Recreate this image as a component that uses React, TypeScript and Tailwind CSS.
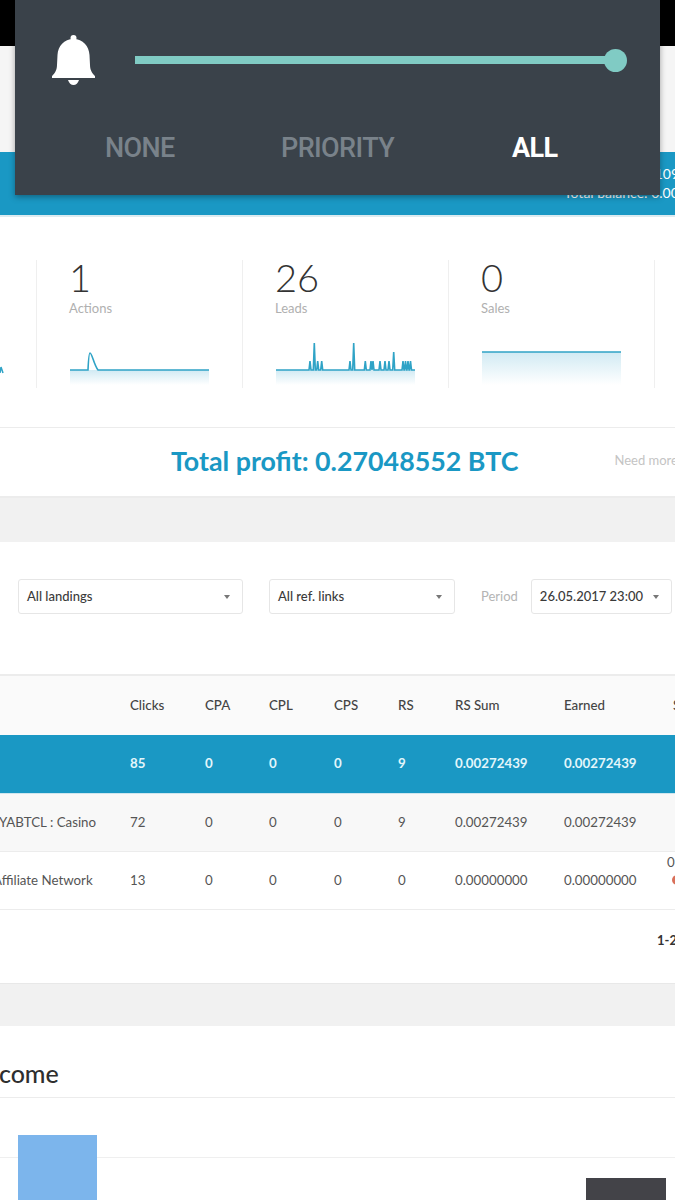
const tableCols = "grid grid-cols-[130px_75px_64px_65px_64px_57px_109px_109px_100px] items-center";

const leadSpikes: [number, number][] = [
  [34, 9], [38.3, 27], [41.7, 9], [45.7, 9], [74, 9], [77.7, 27], [89.3, 9], [95, 9], [97, 9],
  [104, 9], [109, 9], [113, 9], [117.7, 18], [127, 9], [129.5, 9], [132, 9], [134.5, 9],
];

function leadsPath() {
  let d = "M0 35";
  for (const [x, h] of leadSpikes) {
    d += ` L${x - 1} 35 L${x} ${35 - h} L${x + 1} 35`;
  }
  return d + " L139 35";
}

function Spark({ id, line, top }: { id: string; line: string; top: number }) {
  return (
    <svg width="139" height="52" viewBox="0 0 139 52" className="block">
      <defs>
        <linearGradient id={id} x1="0" y1="0" x2="0" y2="1">
          <stop offset="0" stopColor="#1a98c4" stopOpacity="0.2" />
          <stop offset="1" stopColor="#1a98c4" stopOpacity="0" />
        </linearGradient>
      </defs>
      <rect x="0" y={top} width="139" height={50 - top} fill={`url(#${id})`} />
      <path d={line} fill="none" stroke="#2fa3c6" strokeWidth="1.6" />
    </svg>
  );
}

function Stat({ value, label, id, line, top }: { value: string; label: string; id: string; line: string; top: number }) {
  return (
    <div className="w-[206px] shrink-0 h-[128px] border-l border-[#efefef] pl-[32px]">
      <div className="text-[38px] leading-[36px] font-light text-[#333] -mt-[1px]">{value}</div>
      <div className="text-[13px] leading-[16px] mt-[5px] text-[#b0b0b0]">{label}</div>
      <div className="mt-[19px] ml-[1px]">
        <Spark id={id} line={line} top={top} />
      </div>
    </div>
  );
}

function Select({ label, className }: { label: string; className: string }) {
  return (
    <div className={`h-[35px] border border-[#e6e6e6] rounded-[3px] flex items-center justify-between pl-[8px] pr-[12px] text-[13px] font-medium text-[#3a3a3a] ${className}`}>
      <span className="whitespace-nowrap">{label}</span>
      <span className="w-0 h-0 border-x-[3px] border-x-transparent border-t-[4px] border-t-[#777]" />
    </div>
  );
}

function Row({ cells, className }: { cells: string[]; className: string }) {
  return (
    <div className={`${tableCols} text-[13.3px] ${className}`}>
      {cells.map((c, i) => (
        <div key={i} className="whitespace-nowrap">{c}</div>
      ))}
    </div>
  );
}

export default function App() {
  return (
    <div className="relative w-[675px] h-[1200px] overflow-hidden bg-white font-['Lato',sans-serif]">
      {/* notification volume panel */}
      <div className="absolute left-[15px] top-0 z-10 w-[645px] h-[195px] bg-[#3a424a] shadow-[0_2px_6px_rgba(0,0,0,0.35)] font-['Roboto',sans-serif]">
        <div className="flex items-center pl-[37px] pr-[33px] pt-[35px]">
          <svg width="44" height="50" viewBox="0 0 44 50" className="shrink-0" fill="#ffffff">
            <circle cx="21.5" cy="3" r="3" />
            <path d="M21.5 4C12 4 6 11 5.5 20L5 30C5 36 2 39 0 41L0 43L43 43L43 41C41 39 38 36 38 30L37.5 20C37 11 31 4 21.5 4Z" />
            <path d="M16 45H27C26 48 24 50 21.5 50C19 50 17 48 16 45Z" />
          </svg>
          <div className="flex-1 flex items-center ml-[39px]">
            <div className="flex-1 h-[8px] bg-[#80cbc4]" />
            <div className="w-[23px] h-[23px] -ml-[2px] rounded-full bg-[#80cbc4]" />
          </div>
        </div>
        <div className="relative h-[40px] mt-[43px] text-[27px] leading-[40px] font-medium tracking-[-0.6px]">
          <span className="absolute left-[90px] text-[#79828a]">NONE</span>
          <span className="absolute left-[266px] text-[#79828a]">PRIORITY</span>
          <span className="absolute left-[497px] text-white font-bold">ALL</span>
        </div>
      </div>

      <div className="h-[46px] bg-black" />
      <div className="h-[106px] bg-[#f5f5f5]" />

      {/* balance bar */}
      <div className="h-[63px] bg-[#1a98c4] text-white text-[14px] leading-[19px] pt-[12px] whitespace-nowrap">
        <div className="pl-[572px]">Balance: 0.00109</div>
        <div className="pl-[564px]">Total balance: 0.00</div>
      </div>
      <div className="h-[2px] bg-[#dcebf0]" />

      {/* stats */}
      <div className="h-[211px] flex pt-[43px] border-b border-[#ececec]">
        <div className="w-[36px] shrink-0 h-[128px] relative">
          <svg width="4" height="10" viewBox="0 0 4 10" className="absolute left-0 top-[104px]">
            <path d="M0 9 L1 3 L3 9" fill="none" stroke="#2fa3c6" strokeWidth="1.5" />
          </svg>
        </div>
        <Stat value="1" label="Actions" id="g1" top={35} line="M0 35 L18 35 C18.5 24 19 18 20 18 C22 18 24 30 28 35 L139 35" />
        <Stat value="26" label="Leads" id="g2" top={35} line={leadsPath()} />
        <Stat value="0" label="Sales" id="g3" top={17} line="M0 17 L139 17" />
        <div className="w-[21px] shrink-0 h-[128px] border-l border-[#efefef]" />
      </div>

      {/* total profit */}
      <div className="h-[70px] flex items-center pb-[2px] border-b-2 border-[#ececec] whitespace-nowrap">
        <div className="ml-[171px] text-[26.8px] font-bold text-[#1a98c4]">Total profit: 0.27048552 BTC</div>
        <div className="ml-[96px] text-[13px] text-[#c4c4c4]">Need more?</div>
      </div>
      <div className="h-[44px] bg-[#f1f1f1]" />

      {/* filters */}
      <div className="h-[134px] pt-[37px] pl-[18px] flex items-start border-b-2 border-[#ececec]">
        <Select label="All landings" className="w-[225px]" />
        <Select label="All ref. links" className="w-[186px] ml-[26px]" />
        <div className="ml-[26px] h-[35px] flex items-center text-[13px] text-[#b4b4b4]">Period</div>
        <Select label="26.05.2017 23:00" className="w-[141px] ml-[13px] shrink-0" />
      </div>

      {/* table */}
      <Row
        className="h-[59px] bg-[#fafafa] font-medium text-[#444]"
        cells={["", "Clicks", "CPA", "CPL", "CPS", "RS", "RS Sum", "Earned", "S"]}
      />
      <Row
        className="h-[58px] bg-[#1a98c4] font-bold text-[#e3f6fb]"
        cells={["", "85", "0", "0", "0", "9", "0.00272439", "0.00272439", ""]}
      />
      <div className={`${tableCols} h-[58px] bg-[#f8f8f8] text-[13.3px] text-[#555] border-t border-[#cfe6ee]`}>
        <div className="-ml-[1px] whitespace-nowrap">YABTCL : Casino</div>
        <div>72</div>
        <div>0</div>
        <div>0</div>
        <div>0</div>
        <div>9</div>
        <div>0.00272439</div>
        <div>0.00272439</div>
        <div />
      </div>
      <div className={`${tableCols} h-[58px] text-[13.3px] text-[#555] border-t border-[#ececec]`}>
        <div className="-ml-[7px] whitespace-nowrap">Affiliate Network</div>
        <div>13</div>
        <div>0</div>
        <div>0</div>
        <div>0</div>
        <div>0</div>
        <div>0.00000000</div>
        <div>0.00000000</div>
        <div className="self-start -ml-[6px] leading-[20px] text-[#555]">
          <div>0</div>
          <div className="w-[10px] h-[10px] mt-[3px] ml-[5px] rounded-full bg-[#d9705a]" />
        </div>
      </div>

      {/* pagination */}
      <div className="h-[74px] border-t border-[#ececec] pt-[21px] pl-[657px] text-[13px] font-bold text-[#333] whitespace-nowrap">1-2</div>
      <div className="h-[43px] bg-[#f1f1f1] border-t border-[#e8e8e8]" />

      {/* income chart */}
      <div className="h-[72px] border-b border-[#ececec] pt-[31px] overflow-hidden">
        <div className="-ml-[22px] text-[25px] leading-[32px] font-medium text-[#2e2e2e]">Income</div>
      </div>
      <div className="relative h-[102px] flex items-end justify-between pl-[18px] pr-[9px]">
        <div className="absolute left-0 right-0 top-[59px] h-px bg-[#efefef]" />
        <div className="relative w-[79px] h-[65px] bg-[#7cb5ec]" />
        <div className="relative w-[80px] h-[22px] bg-[#434348]" />
      </div>
    </div>
  );
}
